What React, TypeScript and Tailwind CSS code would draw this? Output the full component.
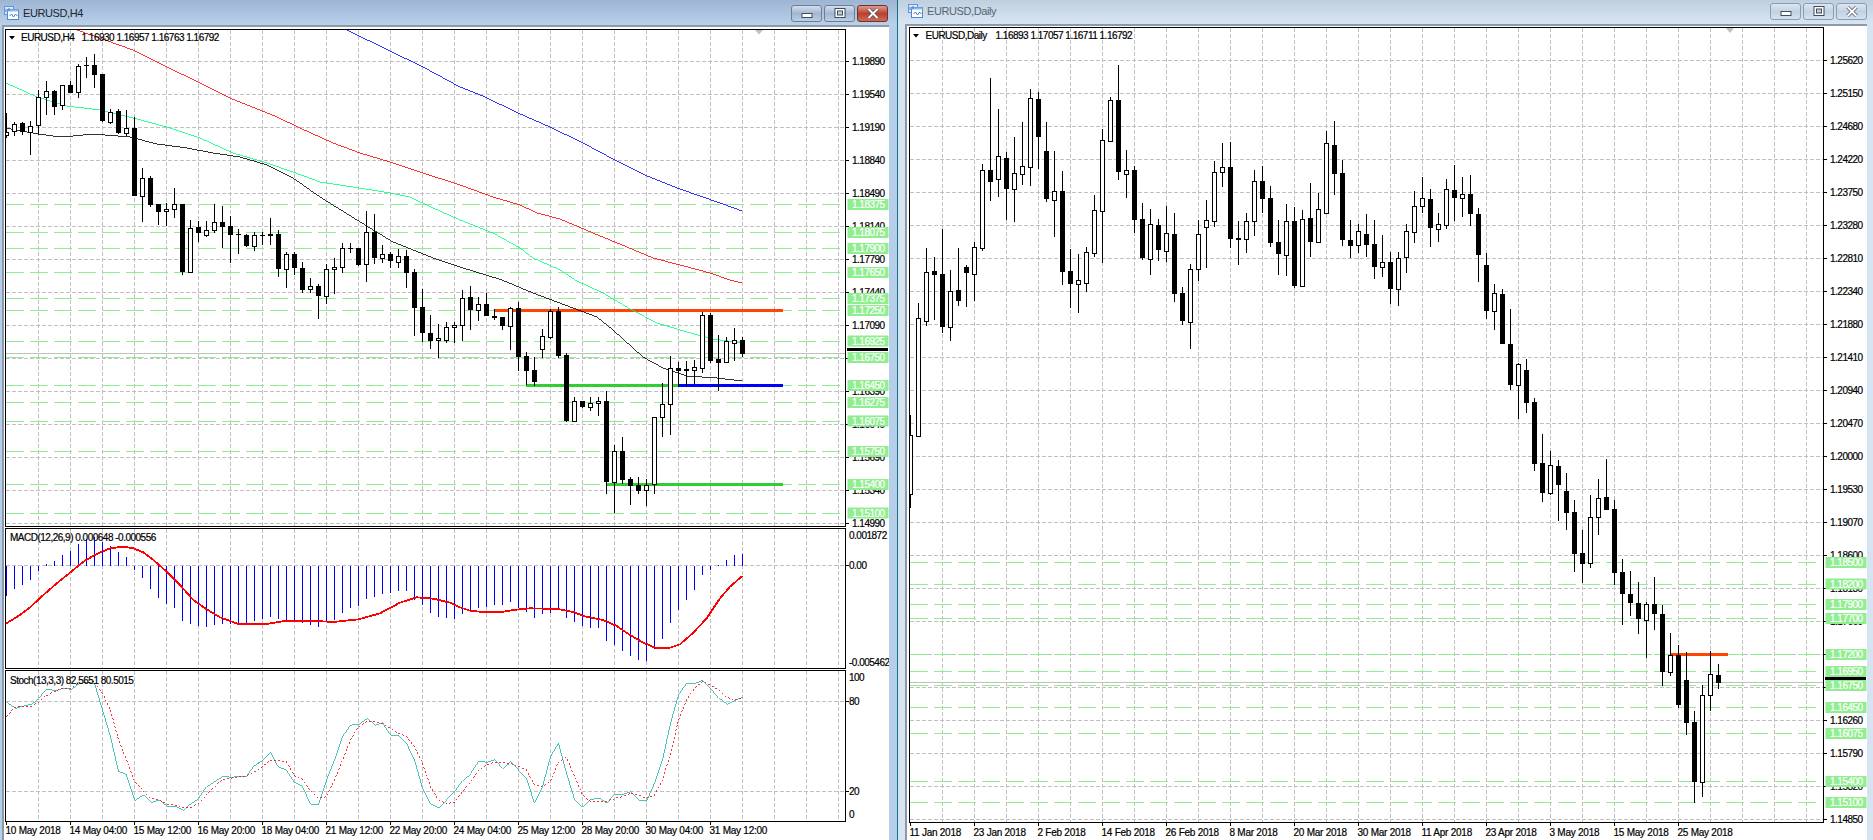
type Candle = [number, number, number, number, number]

const h4Candles: Candle[] = [
  [113,132,135,138,1],[122,124,131,136,1],[122,123,132,135,0],[121,126,132,155,1],[90,97,125,134,1],[81,91,97,115,1],[90,91,107,115,0],[85,85,105,110,1],
  [81,85,93,93,0],[64,66,92,98,1],[57,65,66,78,0],[54,65,75,88,0],[74,74,121,122,0],[109,112,122,124,1],[109,111,133,134,0],[110,128,133,136,1],
  [117,128,196,196,0],[168,178,196,222,1],[176,178,205,207,0],[204,204,212,225,0],[203,209,211,226,1],[188,204,209,218,1],[204,204,272,275,0],[220,228,272,272,1],
  [221,227,233,242,0],[221,230,235,237,1],[204,222,230,233,1],[206,222,227,248,0],[216,226,235,263,0],[229,234,235,254,0],[234,235,246,247,0],[232,235,246,251,1],
  [232,235,236,245,0],[218,234,236,245,0],[230,234,269,277,0],[252,254,269,288,1],[252,254,268,275,0],[262,268,290,293,0],[278,286,289,293,1],[284,286,296,319,0],
  [264,269,296,304,1],[258,267,269,294,1],[243,248,267,273,1],[243,248,249,253,0],[248,248,265,266,0],[211,232,264,282,1],[214,232,258,264,0],[245,254,258,263,1],
  [252,254,261,268,0],[249,256,262,268,1],[250,256,273,288,0],[269,272,308,336,0],[289,307,333,342,0],[315,333,341,349,0],[324,338,340,358,1],[322,327,340,343,1],
  [322,325,327,343,1],[290,298,325,341,1],[286,297,310,330,0],[297,304,310,321,1],[293,304,316,316,0],[309,316,318,320,0],[317,317,326,330,0],[307,308,326,350,1],
  [302,308,357,371,0],[352,356,371,385,0],[357,370,382,386,0],[329,336,349,358,1],[309,311,337,339,1],[307,311,356,358,0],[353,355,421,422,0],[397,401,421,422,1],
  [401,401,407,408,0],[397,403,407,411,1],[397,401,403,416,1],[391,401,482,494,0],[445,451,482,513,1],[437,451,480,484,0],[477,479,486,505,0],[477,485,491,494,0],
  [479,485,490,506,1],[417,417,484,494,1],[383,404,417,437,1],[356,368,404,435,1],[362,368,371,386,0],[361,369,371,386,0],[360,367,370,384,1],[312,315,368,373,1],
  [313,315,361,363,0],[335,359,363,391,0],[337,341,362,362,1],[328,340,343,361,1],[337,340,354,357,0],
]

const dailyCandles: Candle[] = [
  [415,435,494,508,1],[303,318,436,436,1],[248,272,321,326,1],[257,271,275,320,0],[229,274,327,333,0],[270,291,327,341,1],[248,290,301,306,0],[265,267,273,307,0],
  [242,247,274,301,1],[164,170,248,251,1],[78,170,182,201,0],[109,156,179,197,1],[152,158,189,220,0],[137,173,189,222,1],[122,166,174,185,1],[89,98,167,186,1],
  [92,99,137,169,0],[122,151,199,202,0],[151,191,200,237,1],[171,191,272,285,0],[249,271,284,308,0],[254,280,284,313,1],[247,252,283,292,1],[195,210,253,257,1],
  [129,140,211,263,1],[97,100,141,142,1],[65,100,172,180,0],[150,170,174,198,1],[166,170,220,233,0],[203,219,258,260,0],[209,224,259,275,1],[219,225,250,261,0],
  [206,233,251,262,1],[213,234,294,302,0],[287,293,321,325,0],[264,269,322,349,1],[220,234,269,281,1],[200,220,227,268,1],[161,172,221,227,1],[143,167,172,187,1],
  [142,167,239,248,0],[221,238,240,265,0],[213,221,239,253,1],[170,181,221,236,1],[166,181,199,213,0],[186,198,243,247,0],[220,242,254,275,0],[204,221,255,276,1],
  [207,221,286,288,0],[210,219,286,287,1],[183,218,242,257,0],[193,209,242,242,1],[131,143,213,213,1],[121,145,174,195,0],[160,173,240,246,0],[220,240,246,258,0],
  [224,231,245,253,1],[214,234,245,257,0],[220,244,267,279,0],[235,262,267,277,1],[252,262,289,304,0],[252,258,289,306,1],[224,231,257,273,1],[191,206,232,243,1],
  [177,198,206,213,1],[189,199,228,247,0],[213,224,229,242,1],[179,189,225,229,1],[165,190,198,221,0],[177,194,198,217,1],[175,194,214,226,0],[208,214,255,282,0],
  [253,265,311,319,0],[284,293,311,330,1],[289,294,344,344,0],[309,344,385,390,0],[363,364,385,419,1],[359,370,403,413,0],[398,402,464,471,0],[434,463,493,502,0],
  [451,465,493,495,1],[460,466,485,521,0],[473,491,513,530,0],[500,512,554,572,0],[530,553,564,583,0],[495,517,563,568,1],[479,498,517,535,1],[459,497,510,510,0],
  [500,509,573,585,0],[559,572,594,625,0],[571,594,603,616,0],[582,603,619,634,0],[602,604,620,658,1],[577,604,614,630,0],[605,614,672,686,0],[633,655,672,676,1],
  [645,655,705,708,0],[652,680,723,735,0],[711,722,782,803,0],[685,695,782,797,1],[651,674,695,711,1],[664,675,683,689,0],
]

const h4Levels = [
  ['1.18375',204],['1.18075',232],['1.17900',248],['1.17650',272],['1.17375',298],['1.17250',310],['1.16925',340.5],['1.16750',357],
  ['1.16450',385],['1.16275',402],['1.16075',420.5],['1.15750',451],['1.15400',484],['1.15100',512.5],
] as const
const dailyLevels = [
  ['1.18500',562],['1.18200',583.5],['1.17900',604],['1.17700',618],['1.17200',654],['1.16950',671],['1.16750',685],['1.16450',707],
  ['1.16075',733],['1.15400',781],['1.15100',802],
] as const

const h4Scale = ['1.19890','1.19540','1.19190','1.18840','1.18490','1.18140','1.17790','1.17440','1.17090','1.16740','1.16390','1.16040','1.15690','1.15340','1.14990']
const dailyScale = ['1.25620','1.25150','1.24680','1.24220','1.23750','1.23280','1.22810','1.22340','1.21880','1.21410','1.20940','1.20470','1.20000','1.19530','1.19070','1.18600','1.18130','1.17660','1.17190','1.16730','1.16260','1.15790','1.15320','1.14850']

const h4Times = ['10 May 2018','14 May 04:00','15 May 12:00','16 May 20:00','18 May 04:00','21 May 12:00','22 May 20:00','24 May 04:00','25 May 12:00','28 May 20:00','30 May 04:00','31 May 12:00']
const dailyTimes = ['11 Jan 2018','23 Jan 2018','2 Feb 2018','14 Feb 2018','26 Feb 2018','8 Mar 2018','20 Mar 2018','30 Mar 2018','11 Apr 2018','23 Apr 2018','3 May 2018','15 May 2018','25 May 2018']

const maBlue = '347,30 390,51 423,67 460,87 485,97 518,113 550,127 583,143 613,159 647,176 680,189 720,203 742,211'
const maRed = '77,30 133,50 167,67 200,83 230,98 277,117 300,128 333,143 360,153 390,162 423,173 460,185 493,197 520,205 537,213 560,219 593,233 627,247 653,258 680,265 710,273 730,280 742,283'
const maGreen = '6,83 37,97 67,106 100,110 133,118 167,127 200,138 233,153 267,163 293,172 320,182 353,187 390,193 410,197 433,208 460,220 493,233 520,248 533,258 560,270 575,280 603,293 630,309 657,323 687,332 713,339 742,343'
const maBlack = '6,128 38,134 53,136 73,136 93,134 130,137 157,144 187,148 213,153 240,157 267,165 293,178 320,197 357,220 393,242 433,258 460,267 502,280 533,293 573,308 597,317 613,330 643,357 663,368 687,376 717,378 742,381'

// histogram tops, in y px of the 3x crop (crop starts at y=520)
const macdBars = [228,207,195,180,153,133,123,105,93,72,58,50,65,78,96,110,150,173,207,233,252,264,302,312,318,320,314,312,312,310,308,302,297,290,298,302,305,308,315,320,305,300,280,263,258,237,232,222,218,213,213,240,255,278,290,295,297,282,270,263,262,255,255,245,263,275,293,282,280,263,293,305,317,323,323,362,375,393,408,420,423,388,357,308,270,240,210,165,150,136,120,105,102]

const macdLine = [[19,310],[60,285],[90,262],[130,225],[170,190],[210,158],[250,125],[290,102],[330,85],[370,80],[400,85],[430,97],[460,120],[500,155],[540,195],[580,240],[620,268],[660,292],[715,312],[800,312],[860,302],[950,303],[1000,306],[1075,298],[1140,280],[1200,248],[1250,232],[1300,236],[1350,248],[1380,262],[1410,272],[1440,275],[1510,275],[1540,270],[1590,265],[1675,267],[1720,276],[1750,288],[1810,300],[1850,318],[1890,345],[1930,368],[1965,383],[2010,383],[2040,373],[2080,338],[2120,295],[2160,235],[2190,200],[2227,168]]

const stochMain = [548,565,558,553,535,508,512,505,508,490,488,490,570,650,755,765,840,825,847,840,860,858,870,850,835,800,783,769,772,769,769,735,722,697,742,752,788,800,853,853,780,720,650,615,612,596,616,608,645,646,670,720,805,852,865,840,815,782,760,724,727,718,745,725,750,775,850,800,710,670,760,838,862,838,835,850,823,823,814,840,844,790,720,610,525,490,490,480,505,535,553,540,532]
const stochSignal = [590,562,560,558,548,525,515,505,505,490,488,485,520,570,660,720,785,810,835,838,852,855,862,862,850,825,800,778,775,770,768,755,740,720,722,725,768,778,815,835,830,780,720,660,620,605,606,610,625,640,650,680,730,800,840,850,848,815,785,750,735,727,728,730,740,750,795,800,785,725,712,770,825,845,843,845,835,830,820,825,835,825,780,700,600,540,505,485,495,510,532,540,535]

const range = (n: number) => Array.from({ length: n }, (_, i) => i)
const stoch = (vals: number[]) => vals.map((v, i) => `${6.5 + 8 * i},${520 + v / 3}`).join(' ')

const chartFont = "fill-black stroke-black stroke-[0.2px] font-['Liberation_Sans'] text-[10px] tracking-[-0.5px]"
const timeFont = "fill-black stroke-black stroke-[0.2px] font-['Liberation_Sans'] text-[10px] tracking-[-0.25px]"

const Grid = ({ xs, ys, x0, x1, y0, y1 }: { xs: number[]; ys: number[]; x0: number; x1: number; y0: number; y1: number }) => (
  <g stroke="#c0c0c0" strokeDasharray="4 2" shapeRendering="crispEdges">
    {xs.map((x) => <line key={x} x1={x} x2={x} y1={y0} y2={y1} />)}
    {ys.map((y) => <line key={y} x1={x0} x2={x1} y1={y} y2={y} />)}
  </g>
)

const Candles = ({ data, start }: { data: Candle[]; start: number }) => (
  <g shapeRendering="crispEdges">
    {data.map(([hi, top, bottom, lo, bull], i) => {
      const x = start + 8 * i
      return (
        <g key={i}>
          <line x1={x} x2={x} y1={hi} y2={lo} stroke="#000" />
          {bull ? (
            <rect x={x - 2} y={top} width={4} height={Math.max(bottom - top, 1)} fill="#fff" stroke="#000" />
          ) : (
            <rect x={x - 2.5} y={top} width={5} height={Math.max(bottom - top, 1)} fill="#000" />
          )}
        </g>
      )
    })}
  </g>
)

const Levels = ({ ys, x0, x1 }: { ys: number[]; x0: number; x1: number }) => (
  <g stroke="#90ee90" strokeDasharray="18 6" shapeRendering="crispEdges">
    {ys.map((y) => <line key={y} x1={x0} x2={x1} y1={y + 0.5} y2={y + 0.5} />)}
  </g>
)

const PriceAxis = ({ x, y, h, scale, y0, labels, liveY }: {
  x: number; y: number; h: number; scale: string[]; y0: number; labels: readonly (readonly [string, number])[]; liveY: number
}) => (
  <svg viewBox={`${x} ${y} 43 ${h}`} className="block h-full w-[43px] shrink-0">
    {scale.map((p, i) => (
      <g key={p}>
        <line x1={x} x2={x + 3} y1={y0 + 33 * i} y2={y0 + 33 * i} stroke="#000" shapeRendering="crispEdges" />
        <text x={x + 6} y={y0 + 33 * i + 3.5} className={chartFont}>{p}</text>
      </g>
    ))}
    <rect x={x + 1} y={liveY} width={41} height={3} fill="#000" />
    {labels.map(([p, ly]) => (
      <g key={p}>
        <rect x={x + 1.5} y={ly - 5} width={41} height={11} fill="#90ee90" />
        <text x={x + 6} y={ly + 4} fill="#fff" stroke="#fff" strokeWidth="0.2" className="font-['Liberation_Sans'] text-[10px] tracking-[-0.5px]">{p}</text>
      </g>
    ))}
  </svg>
)

const TimeAxis = ({ x, y, w, h, start, labels, baseY }: { x: number; y: number; w: number; h: number; start: number; labels: string[]; baseY: number }) => (
  <svg viewBox={`${x} ${y} ${w} ${h}`} className="block shrink-0" style={{ width: w, height: h }}>
    {labels.map((t, i) => (
      <g key={t}>
        <line x1={start + 64 * i} x2={start + 64 * i} y1={y} y2={y + 3} stroke="#000" shapeRendering="crispEdges" />
        <text x={start + 64 * i - 1} y={baseY} className={timeFont}>{t}</text>
      </g>
    ))}
  </svg>
)

const WinButton = ({ kind, active }: { kind: 'min' | 'max' | 'close'; active: boolean }) => {
  const red = kind === 'close' && active
  return (
    <div
      className={
        red
          ? 'flex h-[17px] w-[31px] items-center justify-center rounded-[3px] border border-[#6e3030] bg-gradient-to-b from-[#dc9a8c] via-[#bb3f2e] to-[#cf6a50]'
          : active
            ? 'flex h-[17px] w-[31px] items-center justify-center rounded-[3px] border border-[#6c7e95] bg-gradient-to-b from-[#d3deeb] via-[#a3b7d0] to-[#bccfe5]'
            : 'flex h-[17px] w-[31px] items-center justify-center rounded-[3px] border border-[#8c9db2] bg-gradient-to-b from-[#dde6f0] via-[#c3d2e3] to-[#d4e2f0]'
      }
    >
      <svg width="14" height="11" viewBox="0 0 14 11">
        {kind === 'min' && <rect x="2" y="5.5" width="10" height="4" fill="#fff" stroke="#3f4c5c" />}
        {kind === 'max' && (
          <>
            <rect x="2" y="0.5" width="10" height="9" fill="#fff" stroke="#3f4c5c" />
            <rect x="4.5" y="3" width="5" height="4" fill="#bfcfe0" stroke="#3f4c5c" />
          </>
        )}
        {kind === 'close' && (
          <>
            <path d="M2.5 1 L11.5 10 M11.5 1 L2.5 10" stroke="#44505e" strokeWidth="3.4" />
            <path d="M2.5 1 L11.5 10 M11.5 1 L2.5 10" stroke="#fff" strokeWidth="2" />
          </>
        )}
      </svg>
    </div>
  )
}

const ChartIcon = () => (
  <svg width="15" height="14" viewBox="0 0 15 14" className="shrink-0">
    <rect x="0.5" y="0.5" width="9" height="8" fill="#dbe8f8" stroke="#5f96dc" />
    <rect x="3.5" y="3.5" width="11" height="10" fill="#fff" stroke="#4f88d8" />
    <rect x="3.5" y="3.5" width="11" height="2" fill="#8fb8ec" />
    <path d="M2 3v3 M5 2v3 M5.5 10l2-2 2 3 2-3 2 2" stroke="#3f78c8" fill="none" />
  </svg>
)

export default function App() {
  const h4Xs = range(26).map((k) => 38.5 + 32 * k)
  const dailyXs = range(28).map((k) => 942.5 + 32 * k)
  const h4Ys = range(15).map((k) => 61.5 + 33 * k)
  const dailyYs = range(24).map((k) => 60.5 + 33 * k)

  return (
    <div className="flex h-[840px] w-[1873px] overflow-hidden bg-white font-['Liberation_Sans',sans-serif]">
      {/* H4 window */}
      <section className="flex h-full w-[898px] shrink-0 flex-col border-r border-[#12708a] bg-[#b5cfea]">
        <header className="flex h-[25px] shrink-0 items-start justify-between bg-gradient-to-b from-[#9db5d2] to-[#b9d1eb] pl-[4px] pr-[9px] pt-[5px]">
          <div className="flex items-center gap-[4px]">
            <ChartIcon />
            <span className="text-[11px] leading-[16px] tracking-[-0.4px] text-[#1c2530]">EURUSD,H4</span>
          </div>
          <div className="flex gap-[2px]">
            <WinButton kind="min" active />
            <WinButton kind="max" active />
            <WinButton kind="close" active />
          </div>
        </header>
        <div className="flex flex-1 flex-col pl-[2px] pr-[8px]">
          <div className="flex flex-1 flex-col border-l-2 border-t-2 border-[#8d99a6] bg-white pl-[1px] pt-[2px]">
            {/* price pane */}
            <div className="mb-[1px] flex h-[498px]">
              <div className="h-full w-[841px] border border-black">
                <svg viewBox="6 30 839 496" className="block h-full w-full">
                  <Grid xs={h4Xs} ys={h4Ys} x0={6} x1={845} y0={30} y1={526} />
                  <Levels ys={h4Levels.map((l) => l[1])} x0={6} x1={845} />
                  <line x1={6} x2={845} y1={353.5} y2={353.5} stroke="#c0c0c0" shapeRendering="crispEdges" />
                  <polygon points="755,30 763,30 759,34.5" fill="#c0c0c0" />
                  <g shapeRendering="crispEdges" strokeWidth="3">
                    <line x1={494} x2={783} y1={310.5} y2={310.5} stroke="#ff4500" />
                    <line x1={526} x2={678} y1={385.5} y2={385.5} stroke="#32cd32" />
                    <line x1={678} x2={783} y1={385.5} y2={385.5} stroke="#0000ff" />
                    <line x1={607} x2={783} y1={484.5} y2={484.5} stroke="#32cd32" />
                  </g>
                  <g fill="none" shapeRendering="crispEdges" strokeWidth="0.8">
                    <polyline points={maBlue} stroke="#0000ff" />
                    <polyline points={maRed} stroke="#ff0000" />
                    <polyline points={maGreen} stroke="#00ff7f" />
                    <polyline points={maBlack} stroke="#000000" />
                  </g>
                  <Candles data={h4Candles} start={6.5} />
                  <polygon points="9,36 15,36 12,39.5" fill="#000" />
                  <text x={21} y={41} className={chartFont}>EURUSD,H4</text>
                  <text x={81.5} y={41} className={chartFont}>1.16930 1.16957 1.16763 1.16792</text>
                </svg>
              </div>
              <PriceAxis x={846} y={29} h={498} scale={h4Scale} y0={61.5} labels={h4Levels} liveY={348} />
            </div>
            {/* MACD pane */}
            <div className="mb-[1px] flex h-[141px]">
              <div className="h-full w-[841px] border border-black">
                <svg viewBox="6 529 839 139" className="block h-full w-full">
                  <Grid xs={h4Xs} ys={[565.5]} x0={6} x1={845} y0={529} y1={668} />
                  <g stroke="#0000ff" shapeRendering="crispEdges">
                    {macdBars.map((v, i) => (
                      <line key={i} x1={6.5 + 8 * i} x2={6.5 + 8 * i} y1={565.5} y2={520 + v / 3} />
                    ))}
                  </g>
                  <polyline
                    points={macdLine.map(([x, y]) => `${x / 3},${520 + y / 3}`).join(' ')}
                    fill="none"
                    stroke="#ff0000"
                    strokeWidth="1.8"
                    shapeRendering="crispEdges"
                  />
                  <text x={10} y={541} className={chartFont}>MACD(12,26,9) 0.000648 -0.000556</text>
                </svg>
              </div>
              <svg viewBox="846 528 43 141" className="block h-full w-[43px] shrink-0">
                <line x1={846} x2={849} y1={565.5} y2={565.5} stroke="#000" shapeRendering="crispEdges" />
                <text x={849} y={539} className={chartFont}>0.001872</text>
                <text x={849} y={569} className={chartFont}>0.00</text>
                <text x={849} y={665.5} className={chartFont}>-0.005462</text>
              </svg>
            </div>
            {/* Stochastic pane */}
            <div className="flex h-[152px]">
              <div className="h-full w-[841px] border border-black">
                <svg viewBox="6 671 839 150" className="block h-full w-full">
                  <Grid xs={h4Xs} ys={[701.5, 791.5]} x0={6} x1={845} y0={671} y1={821} />
                  <polyline points={stoch(stochMain)} fill="none" stroke="#20b2aa" strokeWidth="0.8" shapeRendering="crispEdges" />
                  <polyline points={stoch(stochSignal)} fill="none" stroke="#ff0000" strokeWidth="0.8" strokeDasharray="2 2" shapeRendering="crispEdges" />
                  <text x={10} y={683.5} className={chartFont}>Stoch(13,3,3) 82.5651 80.5015</text>
                </svg>
              </div>
              <svg viewBox="846 670 43 152" className="block h-full w-[43px] shrink-0">
                <line x1={846} x2={849} y1={701.5} y2={701.5} stroke="#000" shapeRendering="crispEdges" />
                <line x1={846} x2={849} y1={791.5} y2={791.5} stroke="#000" shapeRendering="crispEdges" />
                <text x={849} y={681} className={chartFont}>100</text>
                <text x={849} y={705} className={chartFont}>80</text>
                <text x={849} y={795} className={chartFont}>20</text>
                <text x={849} y={818} className={chartFont}>0</text>
              </svg>
            </div>
            <TimeAxis x={5} y={822} w={884} h={18} start={6.5} labels={h4Times} baseY={834} />
          </div>
        </div>
      </section>

      {/* Daily window */}
      <section className="flex h-full flex-1 flex-col bg-[#d6e4f2]">
        <header className="flex h-[24px] shrink-0 items-start justify-between bg-gradient-to-b from-[#c0cfdf] to-[#d8e6f4] pl-[10px] pr-[6px] pt-[3px]">
          <div className="flex items-center gap-[4px]">
            <ChartIcon />
            <span className="text-[11px] leading-[16px] tracking-[-0.4px] text-[#5a6470]">EURUSD,Daily</span>
          </div>
          <div className="flex gap-[2px]">
            <WinButton kind="min" active={false} />
            <WinButton kind="max" active={false} />
            <WinButton kind="close" active={false} />
          </div>
        </header>
        <div className="flex flex-1 flex-col pl-[7px] pr-[6px]">
          <div className="flex flex-1 flex-col border-l-2 border-t-2 border-[#8d99a6] bg-white pl-[2px] pt-[1px]">
            <div className="flex h-[796px]">
              <div className="h-full w-[915px] border border-black">
                <svg viewBox="910 28 913 794" className="block h-full w-full">
                  <Grid xs={dailyXs} ys={dailyYs} x0={910} x1={1823} y0={28} y1={822} />
                  <Levels ys={dailyLevels.map((l) => l[1])} x0={910} x1={1817} />
                  <line x1={910} x2={1823} y1={682.5} y2={682.5} stroke="#c0c0c0" shapeRendering="crispEdges" />
                  <polygon points="1726,28 1734,28 1730,33" fill="#c0c0c0" />
                  <line x1={1671} x2={1728} y1={654.5} y2={654.5} stroke="#ff4500" strokeWidth="3" shapeRendering="crispEdges" />
                  <Candles data={dailyCandles} start={910.5} />
                  <polygon points="913,34 919,34 916,37.5" fill="#000" />
                  <text x={925.5} y={39} className={chartFont}>EURUSD,Daily</text>
                  <text x={995.5} y={39} className={chartFont}>1.16893 1.17057 1.16711 1.16792</text>
                </svg>
              </div>
              <PriceAxis x={1824} y={27} h={796} scale={dailyScale} y0={60.5} labels={dailyLevels} liveY={677} />
            </div>
            <TimeAxis x={909} y={823} w={958} h={17} start={910.5} labels={dailyTimes} baseY={835.5} />
          </div>
        </div>
      </section>
    </div>
  )
}
